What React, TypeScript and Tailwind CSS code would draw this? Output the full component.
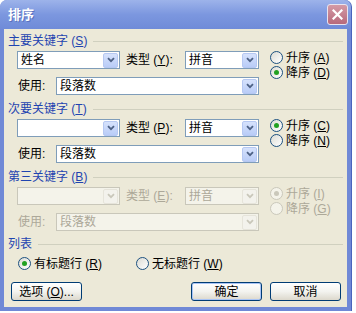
import { ReactNode } from 'react';

const font = "font-['Liberation_Sans','Noto_Sans_CJK_SC',sans-serif]";

function Key({ k }: { k: string }) {
  return (
    <span>
      {' ('}
      <span className="underline underline-offset-1">{k}</span>
      {')'}
    </span>
  );
}

function Chevron({ disabled }: { disabled?: boolean }) {
  return (
    <svg width="8" height="6" viewBox="0 0 8 6">
      <path
        d="M1 1.2 L4 4.2 L7 1.2"
        fill="none"
        stroke={disabled ? '#c9c7ba' : '#4d6185'}
        strokeWidth="1.8"
      />
    </svg>
  );
}

function Combo({ text, className = '', disabled }: { text?: string; className?: string; disabled?: boolean }) {
  return (
    <div
      className={`flex h-[18px] items-center border ${
        disabled ? 'border-[#c9c7ba] bg-[#f4f3ea] text-[#aca899]' : 'border-[#7f9db9] bg-white text-black'
      } ${className}`}
    >
      <span className="flex-1 truncate pl-[3px] text-[12px] leading-[14px]">{text}</span>
      <div
        className={`mr-px flex h-[15px] w-[15px] items-center justify-center rounded-[2px] border ${
          disabled ? 'border-[#e6e4da] bg-[#f3f2ec]' : 'border-[#b6c8f2] bg-gradient-to-b from-[#d6e2fc] to-[#b9ccf7]'
        }`}
      >
        <Chevron disabled={disabled} />
      </div>
    </div>
  );
}

function Radio({ checked, disabled, children }: { checked?: boolean; disabled?: boolean; children: ReactNode }) {
  return (
    <div className="flex h-[15px] items-center gap-[3px]">
      <div
        className={`flex h-[13px] w-[13px] items-center justify-center rounded-full border ${
          disabled ? 'border-[#cac8bb] bg-[#f4f3ea]' : 'border-[#1c5180] bg-gradient-to-br from-[#dcdcd4] to-white'
        }`}
      >
        {checked && (
          <div className={`h-[5px] w-[5px] rounded-full ${disabled ? 'bg-[#cac8bb]' : 'bg-[#21a121]'}`} />
        )}
      </div>
      <span className={`text-[12px] leading-[14px] ${disabled ? 'text-[#aca899]' : 'text-black'}`}>{children}</span>
    </div>
  );
}

function Header({ label, k }: { label: string; k?: string }) {
  return (
    <div className="flex h-[14px] items-center">
      <span className="text-[12px] leading-[14px] text-[#1f44b0]">
        {label}
        {k && <Key k={k} />}
      </span>
      <div className="ml-[6px] h-px flex-1 bg-[#d0d0bf]" />
    </div>
  );
}

interface GroupProps {
  title: string;
  k: string;
  typeKey: string;
  field?: string;
  asc: string;
  desc: string;
  ascChecked: boolean;
  disabled?: boolean;
}

function KeyGroup({ title, k, typeKey, field, asc, desc, ascChecked, disabled }: GroupProps) {
  const labelColor = disabled ? 'text-[#aca899]' : 'text-black';
  return (
    <div className="flex flex-col">
      <Header label={title} k={k} />
      <div className="mt-[3px] flex">
        <div className="ml-[9px] flex w-[242px] flex-col gap-[8px]">
          <div className="flex h-[18px] items-center">
            <Combo text={field} className="w-[103px]" disabled={disabled} />
            <span className={`ml-[6px] w-[59px] text-[12px] leading-[14px] ${labelColor}`}>
              类型<Key k={typeKey} />:
            </span>
            <Combo text="拼音" className="w-[74px]" disabled={disabled} />
          </div>
          <div className="flex h-[18px] items-center">
            <span className={`ml-[1px] w-[38px] text-[12px] leading-[14px] ${labelColor}`}>使用:</span>
            <Combo text="段落数" className="flex-1" disabled={disabled} />
          </div>
        </div>
        <div className="-mt-[1px] ml-[11px] flex flex-col">
          <Radio checked={ascChecked} disabled={disabled}>
            升序<Key k={asc} />
          </Radio>
          <Radio checked={!ascChecked} disabled={disabled}>
            降序<Key k={desc} />
          </Radio>
        </div>
      </div>
    </div>
  );
}

function Button({ children, primary }: { children: ReactNode; primary?: boolean }) {
  return (
    <div
      className={`flex h-[19px] w-[71px] items-center justify-center rounded-[3px] border border-[#003c74] bg-gradient-to-b from-white via-[#f3f3ef] to-[#dcd8cc] text-[12px] leading-[14px] text-black ${
        primary ? 'shadow-[inset_0_0_0_1px_#a9c4f5]' : ''
      }`}
    >
      {children}
    </div>
  );
}

export default function App() {
  return (
    <div className={`h-[313px] w-[356px] overflow-hidden bg-white ${font}`}>
      <div className="flex h-[311px] w-[352px] flex-col rounded-t-[7px] border-r border-[#4a64bd] bg-[#7089d6]">
        {/* title bar */}
        <div className="flex h-[29px] items-center rounded-t-[7px] bg-gradient-to-b from-[#9db3ea] via-[#7c97df] to-[#6f8bd8] pl-[8px] pr-[3px]">
          <span className="flex-1 text-[13px] font-bold leading-[16px] text-white [text-shadow:1px_1px_0_#5a72c0]">
            排序
          </span>
          <div className="flex h-[21px] w-[21px] items-center justify-center rounded-[3px] border border-[#e8e4ef] bg-gradient-to-b from-[#d49aa6] to-[#b76a7c]">
            <svg width="11" height="11" viewBox="0 0 11 11">
              <path d="M1.5 1.5 L9.5 9.5 M9.5 1.5 L1.5 9.5" stroke="white" strokeWidth="2.2" strokeLinecap="square" />
            </svg>
          </div>
        </div>

        {/* client */}
        <div className="mx-[4px] mb-[4px] flex flex-1 flex-col bg-[#ece9d8] px-[4px] pt-[5px]">
          <KeyGroup title="主要关键字" k="S" typeKey="Y" field="姓名" asc="A" desc="D" ascChecked={false} />
          <div className="mt-[7px]">
            <KeyGroup title="次要关键字" k="T" typeKey="P" field="" asc="C" desc="N" ascChecked={true} />
          </div>
          <div className="mt-[7px]">
            <KeyGroup title="第三关键字" k="B" typeKey="E" field="" asc="I" desc="G" ascChecked={true} disabled />
          </div>

          <div className="mt-[6px]">
            <Header label="列表" />
          </div>
          <div className="mt-[5px] flex">
            <div className="ml-[10px] w-[118px]">
              <Radio checked>
                有标题行<Key k="R" />
              </Radio>
            </div>
            <Radio>
              无标题行<Key k="W" />
            </Radio>
          </div>

          <div className="mt-[11px] flex pr-[2px]">
            <div className="ml-[3px]">
              <Button>
                选项 (<span className="underline underline-offset-1">O</span>)...
              </Button>
            </div>
            <div className="ml-auto flex gap-[8px]">
              <Button primary>确定</Button>
              <Button>取消</Button>
            </div>
          </div>
        </div>
      </div>
    </div>
  );
}
